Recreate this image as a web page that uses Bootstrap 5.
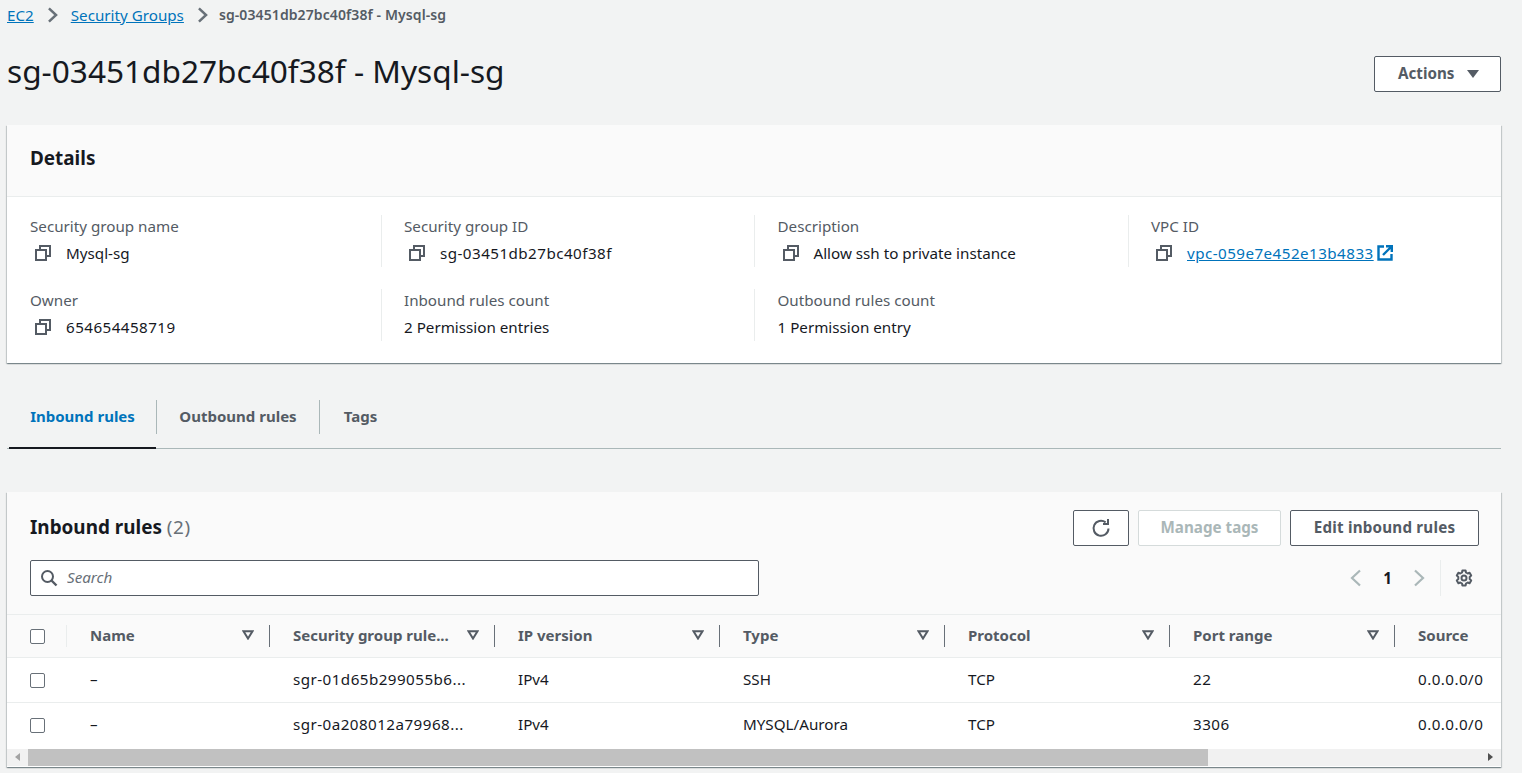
<!DOCTYPE html>
<html lang="en">
<head>
    <meta charset="UTF-8">
    <title>sg-03451db27bc40f38f - Mysql-sg</title>
    <link href="https://cdn.jsdelivr.net/npm/bootstrap@5.3.0/dist/css/bootstrap.min.css" rel="stylesheet">
    <style>
        html, body { height: 773px; overflow: hidden; }
        body { background: #f2f3f3; color: #16191f; font-family: "Noto Sans", "Open Sans", sans-serif; font-size: 15.2px; line-height: 20px; }
        a { color: #0073bb; }
        .dig { letter-spacing: .45px; }
        .page-wrap { padding: 0 21px 0 7px; }
        .crumbs { margin: 0; padding-top: 4px; height: 26px; align-items: center; }
        .crumbs .here { color: #545b64; font-weight: 600; font-size: 14px; letter-spacing: .1px; margin-left: -2px; }
        .crumbs svg { margin: 0 13px; color: #687078; }
        .title-bar { height: 99px; padding-bottom: 3px; }
        .title-bar h1 { font-size: 31.6px; line-height: 36px; font-weight: 400; margin: 0 0 6px; }
        .aws-btn { border: 1px solid #545b64; border-radius: 2px; background: #fff; color: #545b64; font-weight: 700; font-size: 15.2px; line-height: 20px; height: 36px; padding: 0 23px 2px; }
        .aws-btn:disabled { background: #fff; border-color: #d5dbdb; color: #aab7b8; opacity: 1; }
        .act-btn { width: 127px; padding-right: 21px; }
        .caret-d { width: 0; height: 0; border-left: 6px solid transparent; border-right: 6px solid transparent; border-top: 8px solid #545b64; margin-top: 2px; }
        .aws-card { border: 0; border-radius: 0; background: #fff; box-shadow: 0 1px 1px 0 rgba(0,28,36,.3), 1px 1px 1px 0 rgba(0,28,36,.15), -1px 1px 1px 0 rgba(0,28,36,.15); }
        .aws-card .card-header { background: #fafafa; border-radius: 0; border-bottom: 1px solid #eaeded; }
        .det-head { height: 72px; padding: 21px 23px; }
        .det-head h2 { font-size: 18.9px; line-height: 24px; font-weight: 700; margin: 0; }
        .det-body { padding: 18px 0 0; height: 166px; }
        .det-row { height: 52px; margin-bottom: 22px; }
        .det-item { padding-left: 22.5px; border-left: 1px solid #eaeded; height: 52px; }
        .det-item.first { padding-left: 23px; border-left: 0; }
        .det-label { color: #545b64; line-height: 24px; margin-top: -1px; }
        .det-val { display: flex; align-items: center; line-height: 20px; margin-top: 5px; height: 20px; }
        .copy-ico { margin: 0 15px 0 5px; }
        .det-val a { text-decoration: underline; }
        .ext-ico { margin-left: 3px; }
        .tab-strip { height: 64px; margin-top: 22px; border-bottom: 1px solid #aab7b8; padding-left: 2px; flex-wrap: nowrap; }
        .tab-strip .nav-link { color: #545b64; font-weight: 700; font-size: 15px; padding: 0; height: 64px; line-height: 62px; border-radius: 0; background: none; }
        .tab-strip .nav-link.active { color: #0073bb; background: none; border-bottom: 2px solid #16191f; height: 64px; }
        .tab-one { width: 147px; text-align: center; }
        .tab-two { width: 162px; text-align: center; }
        .tab-three { width: 81px; text-align: center; }
        .tab-cell { display: flex; align-items: center; height: 64px; }
        .tab-sep { width: 1px; height: 34px; background: #aab7b8; }
        .rules-card { margin-top: 43px; height: 275px; }
        .rules-head { height: 122px; padding: 0 22px 0 23px; }
        .rules-top { height: 68px; padding-top: 18px; }
        .rules-top h2 { font-size: 18.9px; line-height: 34px; margin: 0; font-weight: 700; }
        .rules-top h2 span { color: #687078; font-weight: 400; letter-spacing: .6px; }
        .rules-btns { gap: 9px; }
        .ref-btn { width: 56px; padding: 0; }
        .mng-btn { width: 143px; padding: 0 0 2px; }
        .edit-btn { width: 189px; padding: 0 0 2px; letter-spacing: .2px; }
        .search-box { width: 729px; height: 36px; border: 1px solid #545b64; border-radius: 2px; background: #fff; padding: 0 9px; gap: 9px; }
        .search-box svg { flex: none; }
        .search-box .form-control { border: 0; padding: 0 0 2px; font-style: italic; font-size: 15.2px; background: transparent; box-shadow: none; }
        .search-box .form-control::placeholder { color: #687078; }
        .pager-num { color: #16191f; font-weight: 700; margin: 0 21px; }
        .pager-sep { width: 1px; height: 36px; background: #eaeded; margin: 0 14px 0 15px; }
        .gear-ico { margin-right: 6px; }
        .rules-scroll { overflow: hidden; }
        .rules-table { width: 1841px; table-layout: fixed; margin: 0; }
        .rules-table > :not(caption) > * > * { padding: 0; box-shadow: none; border-color: #eaeded; color: #16191f; background: transparent; vertical-align: middle; }
        .rules-table thead tr { height: 43px; background: #fafafa; }
        .rules-table thead th { color: #545b64; font-weight: 700; font-size: 15px; border-top: 1px solid #eaeded; }
        .rules-table tbody tr { height: 45px; background: #fff; }
        .rules-table tbody tr:last-child { height: 46px; }
        .rules-table tbody tr:last-child td { border-bottom: 0; }
        .th-in { display: flex; align-items: center; justify-content: space-between; height: 22px; padding: 0 15px 2px 23px; border-right: 1px solid #687078; }
        .th-in.last { border-right: 0; }
        .rules-table td.txt { padding: 0 0 2px 23px; }
        .rules-table tbody tr:last-child td.txt { padding-bottom: 4px; }
        .chk-th { height: 22px; padding-left: 23px; border-right: 1px solid #eaeded; display: flex; align-items: center; }
        .rules-table .form-check-input { width: 15px; height: 15px; margin: 0; border: 1px solid #687078; border-radius: 2px; display: block; }
        .rules-table td.chk-td { padding-left: 23px; }
        .fake-bar { height: 17px; background: #f1f1f1; align-items: stretch; }
        .bar-end { width: 21px; display: flex; align-items: center; justify-content: center; flex: none; }
        .bar-thumb { width: 1180px; background: #c1c1c1; flex: none; }
        .bar-arrow-l { border-top: 4px solid transparent; border-bottom: 4px solid transparent; border-right: 5px solid #a3a3a3; }
        .bar-arrow-r { border-top: 4px solid transparent; border-bottom: 4px solid transparent; border-left: 5px solid #505050; }
    </style>
</head>
<body>
<svg width="0" height="0" class="position-absolute">
    <defs>
        <symbol id="ico-copy" viewBox="0 0 16 16">
            <path d="M5 5V1h10v10h-4" fill="none" stroke="#545b64" stroke-width="2"/>
            <rect x="1" y="5" width="10" height="10" fill="none" stroke="#545b64" stroke-width="2"/>
        </symbol>
        <symbol id="ico-filter" viewBox="0 0 12 10">
            <path d="M1.5 1.2h9L6 8.5z" fill="none" stroke="#545b64" stroke-width="2"/>
        </symbol>
        <symbol id="ico-chev" viewBox="0 0 12 18">
            <path d="M2 1.5 10 9l-8 7.5" fill="none" stroke="currentColor" stroke-width="2.8"/>
        </symbol>
    </defs>
</svg>
<div class="page-wrap">
    <nav class="crumbs d-flex">
        <a href="#">EC2</a>
        <svg width="11" height="16"><use href="#ico-chev"/></svg>
        <a href="#">Security Groups</a>
        <svg width="11" height="16"><use href="#ico-chev"/></svg>
        <span class="here">sg-03451db27bc40f38f - Mysql-sg</span>
    </nav>
    <div class="title-bar d-flex justify-content-between align-items-center">
        <h1>sg-03451db27bc40f38f - Mysql-sg</h1>
        <button class="aws-btn act-btn d-flex align-items-center justify-content-between" type="button">Actions <span class="caret-d"></span></button>
    </div>

    <div class="card aws-card">
        <div class="card-header det-head"><h2>Details</h2></div>
        <div class="card-body det-body">
            <div class="row g-0 det-row">
                <div class="col-3 det-item first">
                    <div class="det-label">Security group name</div>
                    <div class="det-val"><svg class="copy-ico" width="16" height="16"><use href="#ico-copy"/></svg>Mysql-sg</div>
                </div>
                <div class="col-3 det-item">
                    <div class="det-label">Security group ID</div>
                    <div class="det-val"><svg class="copy-ico" width="16" height="16"><use href="#ico-copy"/></svg><span class="dig">sg-03451db27bc40f38f</span></div>
                </div>
                <div class="col-3 det-item">
                    <div class="det-label">Description</div>
                    <div class="det-val"><svg class="copy-ico" width="16" height="16"><use href="#ico-copy"/></svg>Allow ssh to private instance</div>
                </div>
                <div class="col-3 det-item">
                    <div class="det-label">VPC ID</div>
                    <div class="det-val"><svg class="copy-ico" width="16" height="16"><use href="#ico-copy"/></svg><a class="dig" href="#">vpc-059e7e452e13b4833</a>
                        <svg class="ext-ico" width="16" height="16" viewBox="0 0 16 16"><path d="M7 1.5H1.5v13h13V9" fill="none" stroke="#0073bb" stroke-width="2.4"/><path d="M6 10 14 2M9 1.2h5.8V7" fill="none" stroke="#0073bb" stroke-width="2.4"/></svg>
                    </div>
                </div>
            </div>
            <div class="row g-0 det-row">
                <div class="col-3 det-item first">
                    <div class="det-label">Owner</div>
                    <div class="det-val"><svg class="copy-ico" width="16" height="16"><use href="#ico-copy"/></svg><span class="dig">654654458719</span></div>
                </div>
                <div class="col-3 det-item">
                    <div class="det-label">Inbound rules count</div>
                    <div class="det-val">2 Permission entries</div>
                </div>
                <div class="col-3 det-item">
                    <div class="det-label">Outbound rules count</div>
                    <div class="det-val">1 Permission entry</div>
                </div>
            </div>
        </div>
    </div>

    <ul class="nav tab-strip">
        <li class="nav-item tab-cell"><a class="nav-link active tab-one" href="#">Inbound rules</a><span class="tab-sep"></span></li>
        <li class="nav-item tab-cell"><a class="nav-link tab-two" href="#">Outbound rules</a><span class="tab-sep"></span></li>
        <li class="nav-item tab-cell"><a class="nav-link tab-three" href="#">Tags</a></li>
    </ul>

    <div class="card aws-card rules-card">
        <div class="card-header rules-head border-0">
            <div class="rules-top d-flex justify-content-between">
                <h2>Inbound rules <span>(2)</span></h2>
                <div class="d-flex rules-btns">
                    <button class="aws-btn ref-btn d-flex align-items-center justify-content-center" type="button" aria-label="Refresh">
                        <svg width="20" height="20" viewBox="0 0 20 20"><path d="M17.5 10.5A7.5 7.5 0 1 1 14.6 4.4" fill="none" stroke="#545b64" stroke-width="2"/><path d="M17 1v5h-5" fill="none" stroke="#545b64" stroke-width="2"/></svg>
                    </button>
                    <button class="aws-btn mng-btn" type="button" disabled>Manage tags</button>
                    <button class="aws-btn edit-btn" type="button">Edit inbound rules</button>
                </div>
            </div>
            <div class="d-flex justify-content-between align-items-center">
                <div class="search-box d-flex align-items-center">
                    <svg width="18" height="18" viewBox="0 0 18 18"><circle cx="7.5" cy="7.5" r="5.5" fill="none" stroke="#545b64" stroke-width="2"/><path d="m11.5 11.5 5 5" stroke="#545b64" stroke-width="2.4"/></svg>
                    <input class="form-control" type="text" placeholder="Search">
                </div>
                <div class="d-flex align-items-center">
                    <svg width="12" height="18" viewBox="0 0 12 18"><path d="M10 1.5 2 9l8 7.5" fill="none" stroke="#aab7b8" stroke-width="2.2"/></svg>
                    <span class="pager-num">1</span>
                    <svg width="12" height="18" viewBox="0 0 12 18"><path d="M2 1.5 10 9l-8 7.5" fill="none" stroke="#aab7b8" stroke-width="2.2"/></svg>
                    <span class="pager-sep"></span>
                    <svg class="gear-ico" width="18" height="18" viewBox="0 0 18 18"><circle cx="9" cy="9" r="2.5" fill="none" stroke="#545b64" stroke-width="2"/><path d="M7.4 1.5h3.2l.4 2 1.7 1 1.9-.7 1.6 2.8-1.5 1.3v2.2l1.5 1.3-1.6 2.8-1.9-.7-1.7 1-.4 2H7.4l-.4-2-1.7-1-1.9.7-1.6-2.8 1.5-1.3V7.9L1.8 6.6l1.6-2.8 1.9.7 1.7-1z" fill="none" stroke="#545b64" stroke-width="2" stroke-linejoin="round"/></svg>
                </div>
            </div>
        </div>
        <div class="rules-scroll">
            <table class="table rules-table">
                <colgroup><col style="width:60px"><col style="width:203px"><col style="width:225px"><col style="width:225px"><col style="width:225px"><col style="width:225px"><col style="width:225px"><col style="width:453px"></colgroup>
                <thead>
                    <tr>
                        <th><div class="chk-th"><input class="form-check-input" type="checkbox" aria-label="Select all"></div></th>
                        <th><div class="th-in">Name <svg width="12" height="10"><use href="#ico-filter"/></svg></div></th>
                        <th><div class="th-in">Security group rule... <svg width="12" height="10"><use href="#ico-filter"/></svg></div></th>
                        <th><div class="th-in">IP version <svg width="12" height="10"><use href="#ico-filter"/></svg></div></th>
                        <th><div class="th-in">Type <svg width="12" height="10"><use href="#ico-filter"/></svg></div></th>
                        <th><div class="th-in">Protocol <svg width="12" height="10"><use href="#ico-filter"/></svg></div></th>
                        <th><div class="th-in">Port range <svg width="12" height="10"><use href="#ico-filter"/></svg></div></th>
                        <th><div class="th-in last">Source</div></th>
                    </tr>
                </thead>
                <tbody>
                    <tr>
                        <td class="chk-td"><input class="form-check-input" type="checkbox" aria-label="Select row"></td>
                        <td class="txt">–</td><td class="txt dig">sgr-01d65b299055b6...</td><td class="txt">IPv4</td><td class="txt">SSH</td><td class="txt">TCP</td><td class="txt dig">22</td><td class="txt dig">0.0.0.0/0</td>
                    </tr>
                    <tr>
                        <td class="chk-td"><input class="form-check-input" type="checkbox" aria-label="Select row"></td>
                        <td class="txt">–</td><td class="txt dig">sgr-0a208012a79968...</td><td class="txt">IPv4</td><td class="txt">MYSQL/Aurora</td><td class="txt">TCP</td><td class="txt dig">3306</td><td class="txt dig">0.0.0.0/0</td>
                    </tr>
                </tbody>
            </table>
        </div>
        <div class="fake-bar d-flex">
            <div class="bar-end"><span class="bar-arrow-l"></span></div>
            <div class="bar-thumb"></div>
            <div class="flex-grow-1"></div>
            <div class="bar-end"><span class="bar-arrow-r"></span></div>
        </div>
    </div>
</div>
</body>
</html>
